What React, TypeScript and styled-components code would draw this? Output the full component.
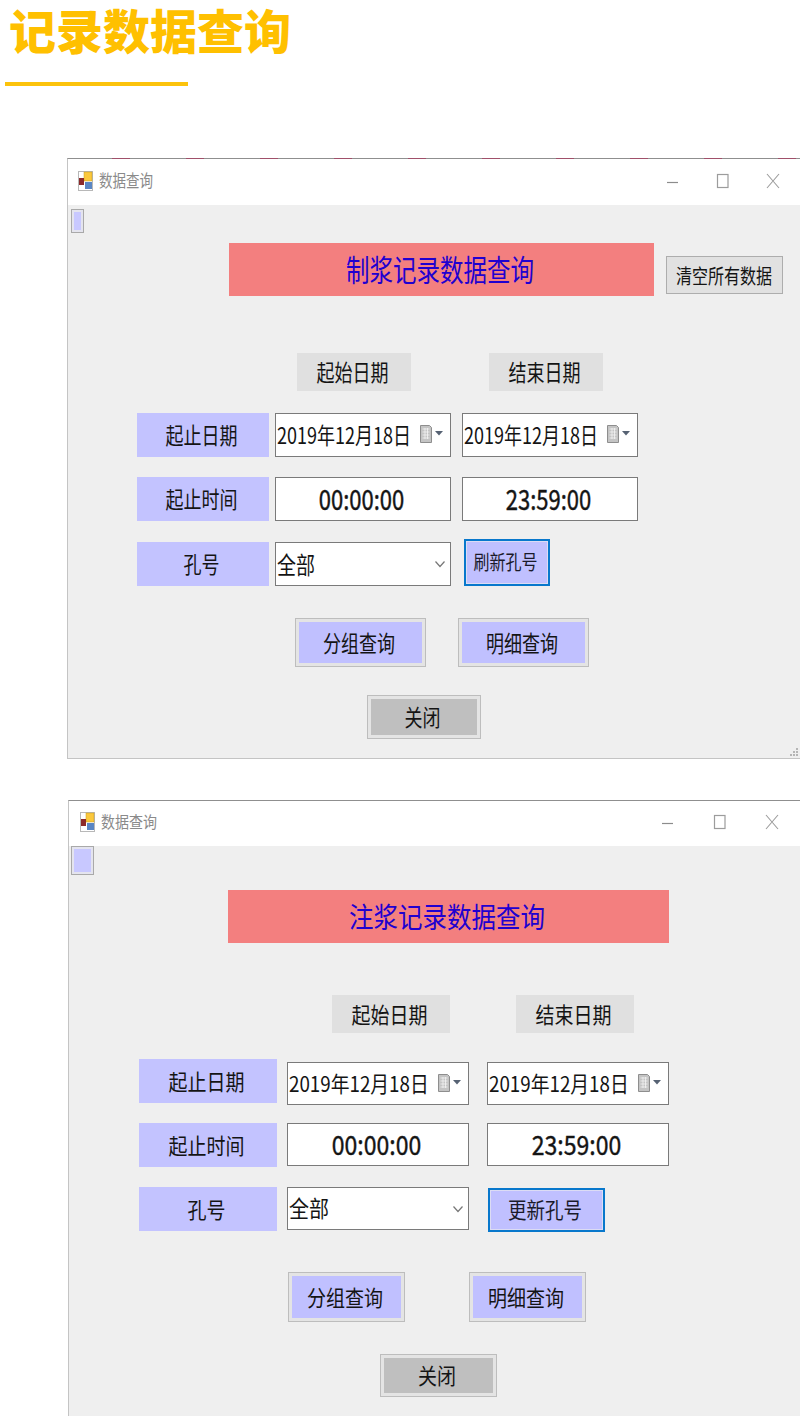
import { FC } from "react";
import styled, { createGlobalStyle } from "styled-components";

const GlobalStyle = createGlobalStyle`
    html, body {
        margin: 0;
        padding: 0;
        background: #fff;
    }
    body {
        font-family: "Noto Sans CJK SC", "Noto Sans", sans-serif;
        color: #141414;
    }
`;

const Page = styled.div`
    width: 800px;
    height: 1416px;
    overflow: hidden;
    position: relative;
`;

const Heading = styled.h1`
    margin: 0;
    padding: 0 0 0 9px;
    height: 66px;
    font-family: "Liberation Sans", "Noto Sans CJK SC", sans-serif;
    font-size: 47px;
    line-height: 66px;
    font-weight: 900;
    color: #ffc000;
`;

const HeadingRule = styled.div`
    width: 183px;
    height: 4px;
    margin: 16px 0 72px 5px;
    background: #fcc30c;
`;

const Window = styled.section<{ $left: number; $height: number; $marks?: boolean; $mb?: number; $sy: number; $dy: number }>`
    --sy: ${(p) => p.$sy};
    --dy: ${(p) => p.$dy}px;
    position: relative;
    box-sizing: border-box;
    width: ${(p) => 800 - p.$left}px;
    height: ${(p) => p.$height}px;
    margin-left: ${(p) => p.$left}px;
    margin-bottom: ${(p) => p.$mb ?? 0}px;
    border: 1px solid #c4c4c4;
    border-right: none;
    border-top-color: #8f8f8f;
    background: #efefef;
    display: flex;
    flex-direction: column;
    &::before {
        content: "";
        position: absolute;
        top: -1px;
        left: 44px;
        right: 0;
        height: 1px;
        background: ${(p) =>
            p.$marks ? "repeating-linear-gradient(90deg, #a0506a 0 18px, transparent 18px 74px)" : "none"};
    }
`;

/* the screenshot is stretched vertically, so the glyphs are taller than wide */
const Stretched = styled.span`
    display: inline-block;
    transform: translateY(var(--dy)) scaleY(var(--sy));
    white-space: nowrap;
`;

const Centered = styled(Stretched)`
    margin-right: 3px;
`;

const TimeText = styled(Centered)`
    -webkit-text-stroke: 0.35px #141414;
`;

const ClearText = styled(Stretched)`
    margin: 4px 1px 0 0;
`;

const TitleBar = styled.header<{ $h: number; $size: number; $pad: number }>`
    flex: none;
    box-sizing: border-box;
    height: ${(p) => p.$h}px;
    display: flex;
    align-items: center;
    background: #fff;
    padding: 0 0 3px ${(p) => p.$pad}px;
    font-size: ${(p) => p.$size}px;
    color: #8a8a8a;
`;

const TitleText = styled(Stretched)`
    margin-left: 6px;
`;

const Controls = styled.div<{ $gap: number; $right: number }>`
    margin-left: auto;
    margin-right: ${(p) => p.$right}px;
    display: flex;
    align-items: center;
    gap: ${(p) => p.$gap}px;
`;

const Row = styled.div<{ $top: number; $indent: number; $gap?: number }>`
    display: flex;
    align-items: flex-start;
    margin-top: ${(p) => p.$top}px;
    padding-left: ${(p) => p.$indent}px;
    gap: ${(p) => p.$gap ?? 0}px;
`;

const StubButton = styled.button<{ $w: number; $h: number }>`
    box-sizing: border-box;
    padding: 0;
    width: ${(p) => p.$w}px;
    height: ${(p) => p.$h}px;
    background: #c8c8ff;
    border: 1px solid #a9a9a9;
    box-shadow: inset 0 0 0 2px #e4e4ee;
`;

const Banner = styled.div<{ $w: number; $size: number }>`
    width: ${(p) => p.$w}px;
    height: 53px;
    background: #f37f7f;
    color: #2000d0;
    font-size: ${(p) => p.$size}px;
    display: flex;
    align-items: center;
    justify-content: center;
`;

const ClearButton = styled.button`
    box-sizing: border-box;
    width: 117px;
    height: 38px;
    margin: 13px 0 0 12px;
    padding: 0;
    background: #e1e1e1;
    border: 1px solid #adadad;
    font: inherit;
    font-size: 16px;
    color: #141414;
`;

const DateCaption = styled.div<{ $w: number; $size: number }>`
    width: ${(p) => p.$w}px;
    height: 38px;
    background: #e0e0e0;
    font-size: ${(p) => p.$size}px;
    display: flex;
    align-items: center;
    justify-content: center;
`;

const RowLabel = styled.div<{ $w: number; $size: number }>`
    width: ${(p) => p.$w}px;
    height: 44px;
    background: #c3c3ff;
    font-size: ${(p) => p.$size}px;
    display: flex;
    align-items: center;
    justify-content: center;
`;

const Field = styled.div<{ $w: number; $h: number; $offset?: number; $gap?: number; $center?: boolean; $size: number }>`
    box-sizing: border-box;
    width: ${(p) => p.$w}px;
    height: ${(p) => p.$h}px;
    margin-top: ${(p) => p.$offset ?? 0}px;
    margin-left: ${(p) => p.$gap ?? 0}px;
    padding: 0 1px;
    background: #fff;
    border: 1px solid #7a7a7a;
    font-size: ${(p) => p.$size}px;
    white-space: nowrap;
    display: flex;
    align-items: center;
    justify-content: ${(p) => (p.$center ? "center" : "flex-start")};
`;

const FieldIcon = styled.span<{ $right: number; $lift?: number }>`
    margin-left: auto;
    margin-right: ${(p) => p.$right}px;
    margin-bottom: ${(p) => p.$lift ?? 0}px;
    display: flex;
    align-items: center;
`;

const FocusButton = styled.button<{ $w: number; $h: number; $offset: number; $gap: number; $size: number }>`
    box-sizing: border-box;
    width: ${(p) => p.$w}px;
    height: ${(p) => p.$h}px;
    margin-top: ${(p) => p.$offset}px;
    margin-left: ${(p) => p.$gap}px;
    padding: 0;
    background: #c0c0ff;
    border: 2px solid #0878cc;
    box-shadow: inset 0 0 0 1px #dcdcf4;
    font: inherit;
    font-size: ${(p) => p.$size}px;
    color: #1a1a2a;
`;

const QueryButton = styled.button<{ $w: number; $h: number; $grey?: boolean; $size: number }>`
    box-sizing: border-box;
    width: ${(p) => p.$w}px;
    height: ${(p) => p.$h}px;
    padding: 0;
    background: ${(p) => (p.$grey ? "#bfbfbf" : "#c0c0ff")};
    border: 1px solid #bdbdbd;
    box-shadow: inset 0 0 0 3px #e4e4e4;
    font: inherit;
    font-size: ${(p) => p.$size}px;
    color: #141414;
`;

const Grip = styled.svg`
    position: absolute;
    right: 1px;
    bottom: 1px;
`;

const AppIcon: FC = () => (
    <svg width="15" height="20" viewBox="0 0 15 20">
        <rect x="0.5" y="0.5" width="14" height="19" fill="#fff" stroke="#b8b8b8" />
        <rect x="6" y="1" width="8" height="9" fill="#fbc83c" stroke="#c49a20" strokeWidth="0.5" />
        <rect x="1" y="7" width="5" height="7" fill="#8c2a2a" />
        <rect x="7" y="11" width="7" height="7" fill="#5a86c4" />
    </svg>
);

const WindowControls: FC<{ gap: number; right: number }> = ({ gap, right }) => (
    <Controls $gap={gap} $right={right}>
        <svg width="14" height="14" viewBox="0 0 14 14">
            <path d="M1 8.5h11" stroke="#8c8c8c" strokeWidth="1.2" />
        </svg>
        <svg width="14" height="16" viewBox="0 0 14 16">
            <rect x="1.5" y="1.5" width="10.5" height="13" fill="none" stroke="#9c9c9c" strokeWidth="1.2" />
        </svg>
        <svg width="14" height="16" viewBox="0 0 14 16">
            <path d="M1 1l12 14M13 1L1 15" stroke="#9c9c9c" strokeWidth="1.1" fill="none" />
        </svg>
    </Controls>
);

const CalendarIcon: FC = () => (
    <svg width="25" height="20" viewBox="0 0 25 20">
        <path d="M1.5 1.5h9l2 2v15h-11z" fill="#c4c4c4" stroke="#8e8e8e" />
        <path d="M3.5 5h7M3.5 8h7M3.5 11h7M3.5 14h7M6 4v11M8.5 4v11" stroke="#f4f4f4" strokeWidth="0.8" />
        <path d="M16 7h8l-4 4.5z" fill="#566273" />
    </svg>
);

const Chevron: FC = () => (
    <svg width="12" height="8" viewBox="0 0 12 8">
        <path d="M1.5 1.5L6 6.5l4.5-5" fill="none" stroke="#777" strokeWidth="1.2" />
    </svg>
);

const GripIcon: FC = () => (
    <Grip width="10" height="10" viewBox="0 0 10 10">
        <path d="M7 1h2v2H7zM4 4h2v2H4zM7 4h2v2H7zM1 7h2v2H1zM4 7h2v2H4zM7 7h2v2H7z" fill="#b5b5b5" />
    </Grip>
);

type FormProps = {
    left: number;
    height: number;
    stretch: number;
    textShift: number;
    marks?: boolean;
    title: { h: number; size: number; pad: number; ctrlGap: number; ctrlRight: number };
    stub: { w: number; h: number; top: number; left: number };
    banner: { text: string; top: number; indent: number; w: number; size: number };
    clear?: boolean;
    captions: { top: number; indent: number; w: number; gap: number; size: number };
    rows: {
        tops: [number, number, number];
        indent: number;
        label: number;
        fieldW: number;
        fieldH: number;
        offset: number;
        gapA: number;
        gapB: number;
        size: number;
        dateSize: number;
        timeSize: number;
    };
    refresh: { text: string; w: number; h: number; offset: number; gap: number; size: number };
    query: { top: number; indent: number; w: number; h: number; gap: number; size: number };
    close: { top: number; indent: number; w: number; h: number; size: number };
    mb?: number;
};

const QueryForm: FC<FormProps> = ({ left, height, stretch, textShift, marks, title, stub, banner, clear, captions, rows, refresh, query, close, mb }) => (
    <Window $left={left} $height={height} $marks={marks} $mb={mb} $sy={stretch} $dy={textShift}>
        <TitleBar $h={title.h} $size={title.size} $pad={title.pad}>
            <AppIcon />
            <TitleText>数据查询</TitleText>
            <WindowControls gap={title.ctrlGap} right={title.ctrlRight} />
        </TitleBar>
        <Row $top={stub.top} $indent={stub.left}>
            <StubButton $w={stub.w} $h={stub.h} />
        </Row>
        <Row $top={banner.top} $indent={banner.indent}>
            <Banner $w={banner.w} $size={banner.size}>
                <Centered>{banner.text}</Centered>
            </Banner>
            {clear && (
                <ClearButton>
                    <ClearText>清空所有数据</ClearText>
                </ClearButton>
            )}
        </Row>
        <Row $top={captions.top} $indent={captions.indent} $gap={captions.gap}>
            <DateCaption $w={captions.w} $size={captions.size}>
                <Centered>起始日期</Centered>
            </DateCaption>
            <DateCaption $w={captions.w} $size={captions.size}>
                <Centered>结束日期</Centered>
            </DateCaption>
        </Row>
        <Row $top={rows.tops[0]} $indent={rows.indent}>
            <RowLabel $w={rows.label} $size={rows.size}>
                <Centered>起止日期</Centered>
            </RowLabel>
            <Field $w={rows.fieldW} $h={rows.fieldH} $offset={rows.offset} $gap={rows.gapA} $size={rows.dateSize}>
                <Stretched>2019年12月18日</Stretched>
                <FieldIcon $right={5} $lift={2}>
                    <CalendarIcon />
                </FieldIcon>
            </Field>
            <Field $w={rows.fieldW} $h={rows.fieldH} $offset={rows.offset} $gap={rows.gapB} $size={rows.dateSize}>
                <Stretched>2019年12月18日</Stretched>
                <FieldIcon $right={5} $lift={2}>
                    <CalendarIcon />
                </FieldIcon>
            </Field>
        </Row>
        <Row $top={rows.tops[1] - rows.offset} $indent={rows.indent}>
            <RowLabel $w={rows.label} $size={rows.size}>
                <Centered>起止时间</Centered>
            </RowLabel>
            <Field $w={rows.fieldW} $h={rows.fieldH} $gap={rows.gapA} $center $size={rows.timeSize}>
                <TimeText>00:00:00</TimeText>
            </Field>
            <Field $w={rows.fieldW} $h={rows.fieldH} $gap={rows.gapB} $center $size={rows.timeSize}>
                <TimeText>23:59:00</TimeText>
            </Field>
        </Row>
        <Row $top={rows.tops[2]} $indent={rows.indent}>
            <RowLabel $w={rows.label} $size={rows.size}>
                <Centered>孔号</Centered>
            </RowLabel>
            <Field $w={rows.fieldW} $h={rows.fieldH} $gap={rows.gapA} $size={rows.size + 1}>
                <Stretched>全部</Stretched>
                <FieldIcon $right={3}>
                    <Chevron />
                </FieldIcon>
            </Field>
            <FocusButton $w={refresh.w} $h={refresh.h} $offset={refresh.offset} $gap={refresh.gap} $size={refresh.size}>
                <Centered>{refresh.text}</Centered>
            </FocusButton>
        </Row>
        <Row $top={query.top} $indent={query.indent} $gap={query.gap}>
            <QueryButton $w={query.w} $h={query.h} $size={query.size}>
                <Centered>分组查询</Centered>
            </QueryButton>
            <QueryButton $w={query.w} $h={query.h} $size={query.size}>
                <Centered>明细查询</Centered>
            </QueryButton>
        </Row>
        <Row $top={close.top} $indent={close.indent}>
            <QueryButton $w={close.w} $h={close.h} $grey $size={close.size}>
                <Centered>关闭</Centered>
            </QueryButton>
        </Row>
        <GripIcon />
    </Window>
);

const App: FC = () => (
    <Page>
        <GlobalStyle />
        <Heading>记录数据查询</Heading>
        <HeadingRule />
        <QueryForm
            left={67}
            height={601}
            stretch={1.25}
            textShift={-1.5}
            marks
            mb={41}
            title={{ h: 46, size: 13.5, pad: 10, ctrlGap: 36, ctrlRight: 20 }}
            stub={{ w: 13, h: 24, top: 4, left: 3 }}
            banner={{ text: "制浆记录数据查询", top: 10, indent: 161, w: 425, size: 23.5 }}
            clear
            captions={{ top: 57, indent: 229, w: 114, gap: 78, size: 18 }}
            rows={{ tops: [22, 20, 21], indent: 69, label: 132, fieldW: 176, fieldH: 44, offset: 0, gapA: 6, gapB: 11, size: 18, dateSize: 18, timeSize: 22 }}
            refresh={{ text: "刷新孔号", w: 86, h: 47, offset: -3, gap: 13, size: 16 }}
            query={{ top: 32, indent: 227, w: 131, h: 49, gap: 32, size: 18 }}
            close={{ top: 28, indent: 299, w: 114, h: 44, size: 18 }}
        />
        <QueryForm
            left={68}
            height={640}
            stretch={1.15}
            textShift={-1}
            title={{ h: 45, size: 14, pad: 11, ctrlGap: 38, ctrlRight: 21 }}
            stub={{ w: 23, h: 29, top: 0, left: 2 }}
            banner={{ text: "注浆记录数据查询", top: 15, indent: 159, w: 441, size: 24.5 }}
            captions={{ top: 52, indent: 263, w: 118, gap: 66, size: 19 }}
            rows={{ tops: [26, 21, 20], indent: 70, label: 138, fieldW: 182, fieldH: 43, offset: 3, gapA: 10, gapB: 18, size: 19, dateSize: 18.8, timeSize: 23 }}
            refresh={{ text: "更新孔号", w: 117, h: 44, offset: 1, gap: 19, size: 18.5 }}
            query={{ top: 40, indent: 219, w: 117, h: 50, gap: 64, size: 19 }}
            close={{ top: 32, indent: 311, w: 117, h: 43, size: 19 }}
        />
    </Page>
);

export default App;
